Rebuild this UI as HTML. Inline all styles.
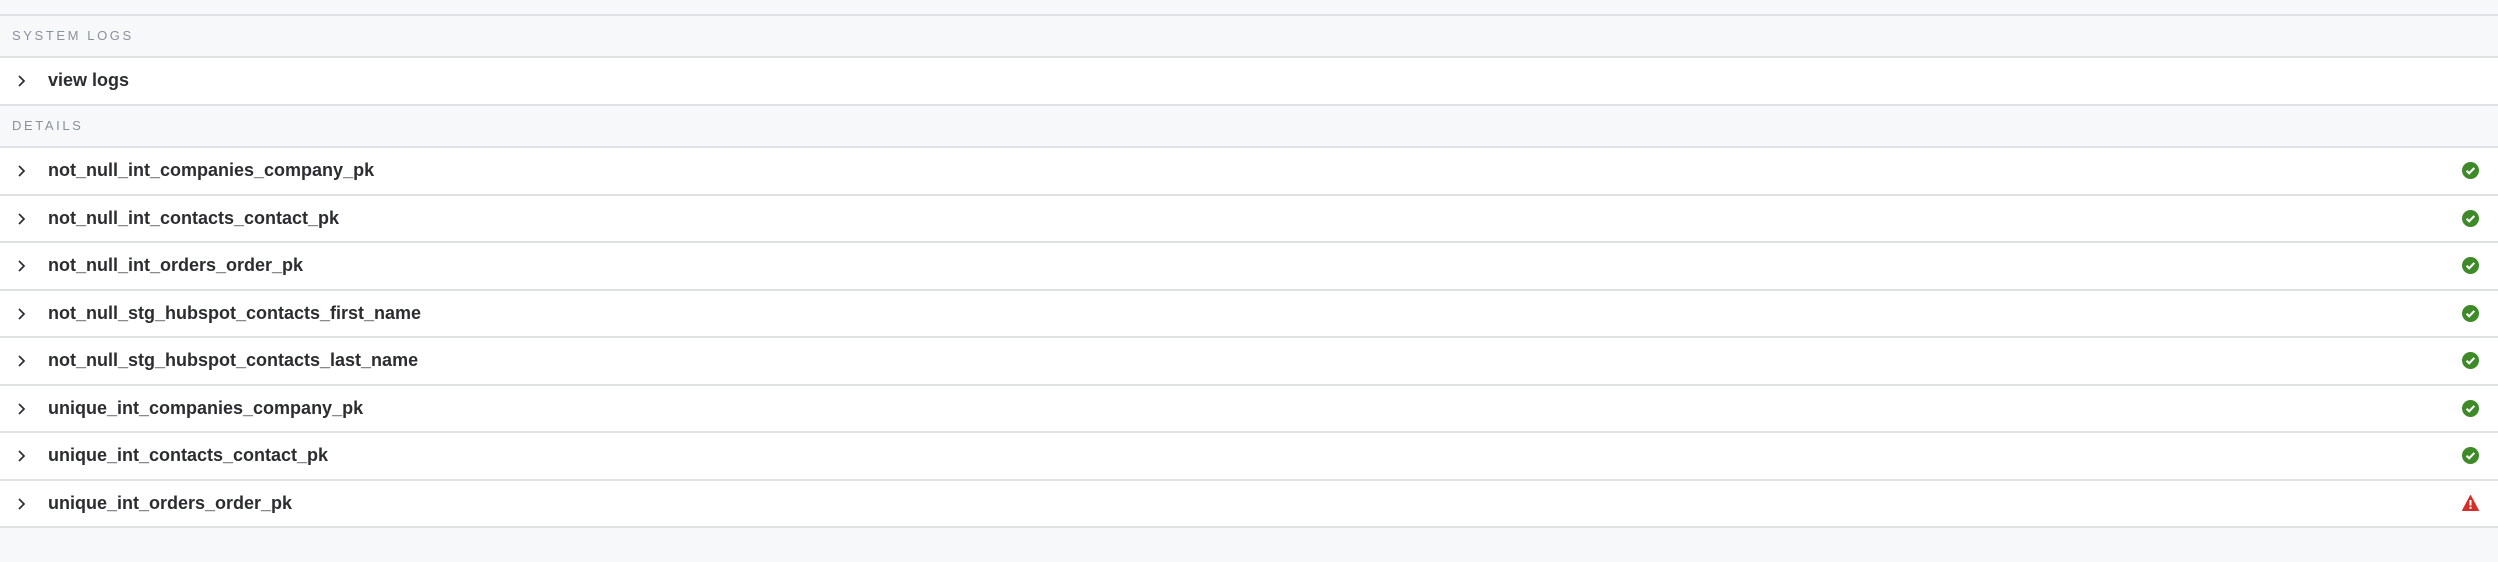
<!DOCTYPE html>
<html><head><style>
*{margin:0;padding:0;box-sizing:border-box}
body{width:2498px;height:562px;background:#f7f8fa;font-family:"Liberation Sans",Arial,sans-serif;overflow:hidden;position:relative}
.top{height:16px;border-bottom:2px solid #e0e1e5}
.hdr{height:42px;border-bottom:2px solid #e0e1e5;background:#f7f8fa;color:#8b9099;font-size:13px;letter-spacing:2.6px;padding-left:12px;line-height:40px}
.row{height:47.5px;background:#fff;border-bottom:2px solid #e0e1e5;position:relative;font-weight:bold;font-size:18px;color:#2b2d31;padding-left:48px;line-height:45px}
.row svg.ch{position:absolute;left:16px;top:16px}
.row .ic{position:absolute;left:2462px;top:14px}
</style></head><body>
<div class="top"></div>
<div class="hdr">SYSTEM LOGS</div>
<div class="row" style="height:48px"><svg class="ch" width="12" height="14" viewBox="0 0 12 14"><path d="M3 2l5 5-5 5" fill="none" stroke="#2b2d31" stroke-width="1.7"/></svg>view logs</div>
<div class="hdr" style="height:42px">DETAILS</div>
<div class="row"><svg class="ch" width="12" height="14" viewBox="0 0 12 14"><path d="M3 2l5 5-5 5" fill="none" stroke="#2b2d31" stroke-width="1.7"/></svg>not_null_int_companies_company_pk<svg class="ic" width="17" height="17" viewBox="0 0 16 16"><circle cx="8" cy="8" r="8" fill="#3e8a29"/><path d="M4.3 8.2l2.5 2.4 4.8-5" fill="none" stroke="#fff" stroke-width="2"/></svg></div>
<div class="row"><svg class="ch" width="12" height="14" viewBox="0 0 12 14"><path d="M3 2l5 5-5 5" fill="none" stroke="#2b2d31" stroke-width="1.7"/></svg>not_null_int_contacts_contact_pk<svg class="ic" width="17" height="17" viewBox="0 0 16 16"><circle cx="8" cy="8" r="8" fill="#3e8a29"/><path d="M4.3 8.2l2.5 2.4 4.8-5" fill="none" stroke="#fff" stroke-width="2"/></svg></div>
<div class="row"><svg class="ch" width="12" height="14" viewBox="0 0 12 14"><path d="M3 2l5 5-5 5" fill="none" stroke="#2b2d31" stroke-width="1.7"/></svg>not_null_int_orders_order_pk<svg class="ic" width="17" height="17" viewBox="0 0 16 16"><circle cx="8" cy="8" r="8" fill="#3e8a29"/><path d="M4.3 8.2l2.5 2.4 4.8-5" fill="none" stroke="#fff" stroke-width="2"/></svg></div>
<div class="row"><svg class="ch" width="12" height="14" viewBox="0 0 12 14"><path d="M3 2l5 5-5 5" fill="none" stroke="#2b2d31" stroke-width="1.7"/></svg>not_null_stg_hubspot_contacts_first_name<svg class="ic" width="17" height="17" viewBox="0 0 16 16"><circle cx="8" cy="8" r="8" fill="#3e8a29"/><path d="M4.3 8.2l2.5 2.4 4.8-5" fill="none" stroke="#fff" stroke-width="2"/></svg></div>
<div class="row"><svg class="ch" width="12" height="14" viewBox="0 0 12 14"><path d="M3 2l5 5-5 5" fill="none" stroke="#2b2d31" stroke-width="1.7"/></svg>not_null_stg_hubspot_contacts_last_name<svg class="ic" width="17" height="17" viewBox="0 0 16 16"><circle cx="8" cy="8" r="8" fill="#3e8a29"/><path d="M4.3 8.2l2.5 2.4 4.8-5" fill="none" stroke="#fff" stroke-width="2"/></svg></div>
<div class="row"><svg class="ch" width="12" height="14" viewBox="0 0 12 14"><path d="M3 2l5 5-5 5" fill="none" stroke="#2b2d31" stroke-width="1.7"/></svg>unique_int_companies_company_pk<svg class="ic" width="17" height="17" viewBox="0 0 16 16"><circle cx="8" cy="8" r="8" fill="#3e8a29"/><path d="M4.3 8.2l2.5 2.4 4.8-5" fill="none" stroke="#fff" stroke-width="2"/></svg></div>
<div class="row"><svg class="ch" width="12" height="14" viewBox="0 0 12 14"><path d="M3 2l5 5-5 5" fill="none" stroke="#2b2d31" stroke-width="1.7"/></svg>unique_int_contacts_contact_pk<svg class="ic" width="17" height="17" viewBox="0 0 16 16"><circle cx="8" cy="8" r="8" fill="#3e8a29"/><path d="M4.3 8.2l2.5 2.4 4.8-5" fill="none" stroke="#fff" stroke-width="2"/></svg></div>
<div class="row"><svg class="ch" width="12" height="14" viewBox="0 0 12 14"><path d="M3 2l5 5-5 5" fill="none" stroke="#2b2d31" stroke-width="1.7"/></svg>unique_int_orders_order_pk<svg class="ic" width="17" height="16" viewBox="0 0 17 16"><path d="M8.5 0.5L16.5 15.5H0.5Z" fill="#d3302a" stroke="#d3302a" stroke-linejoin="round"/><rect x="7.5" y="5" width="2" height="5.5" fill="#fff"/><rect x="7.5" y="11.8" width="2" height="2" fill="#fff"/></svg></div>
</body></html>
